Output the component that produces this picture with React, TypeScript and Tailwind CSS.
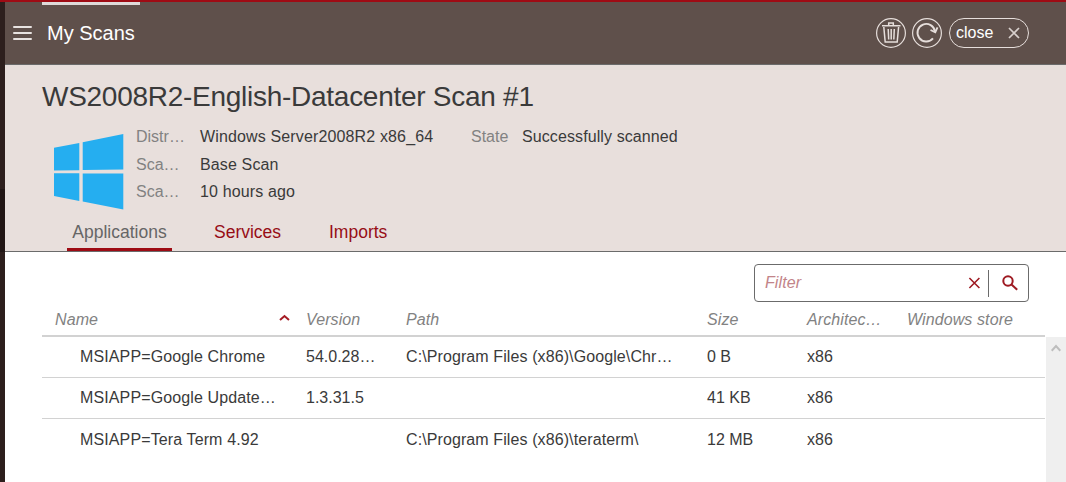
import React from "react";

const details = [
  { label: "Distr…", value: "Windows Server2008R2 x86_64" },
  { label: "Sca…", value: "Base Scan" },
  { label: "Sca…", value: "10 hours ago" },
];

const apps = [
  { name: "MSIAPP=Google Chrome", version: "54.0.28…", path: "C:\\Program Files (x86)\\Google\\Chr…", size: "0 B", arch: "x86" },
  { name: "MSIAPP=Google Update…", version: "1.3.31.5", path: "", size: "41 KB", arch: "x86" },
  { name: "MSIAPP=Tera Term 4.92", version: "", path: "C:\\Program Files (x86)\\teraterm\\", size: "12 MB", arch: "x86" },
];

const columns = "grid grid-cols-[264px_100px_301px_100px_100px_1fr] items-center";

function TrashIcon() {
  return (
    <svg width="30" height="30" viewBox="0 0 30 30" fill="none" stroke="#e6dedb" strokeWidth="1.2">
      <circle cx="15" cy="15" r="14.4" />
      <path d="M6 7.8h18.5M12.7 7.3V4.9h4.6v2.4M7.8 9l1.4 15h12L22.6 9M12.2 11l.5 10.5M15.2 11v10.5M18.3 11l-.5 10.5" strokeWidth="1.5" />
    </svg>
  );
}

function RefreshIcon() {
  return (
    <svg width="30" height="30" viewBox="0 0 30 30" fill="none" stroke="#e6dedb" strokeWidth="1.3">
      <circle cx="15" cy="15" r="14.4" strokeWidth="1.2" />
      <path d="M21 20.4A8.8 8.8 0 1 1 23 13.4" strokeWidth="1.9" />
      <path d="M18.5 12l4.8 2.2L25.5 9.4" strokeWidth="1.8" />
    </svg>
  );
}

function WindowsLogo() {
  return (
    <svg width="70" height="76" viewBox="0 0 70 76" fill="#25aef0">
      <path d="M0 13.8 25.3 9v27.2L0 36.6zM28.7 8.2 69.3 0v35.6L28.7 36zM0 39.2h25.3v27.7L0 62zM28.7 39.5h40.6v36L28.7 67.6z" />
    </svg>
  );
}

export default function App() {
  return (
    <div className="flex h-[482px] w-full flex-col overflow-hidden bg-white font-['Liberation_Sans',Arial,sans-serif] text-base leading-none text-[#3a3a3a]">
      <div className="h-0.5 shrink-0 bg-[#9e0b14]" />
      <div className="flex min-h-0 flex-1">
        <div className="flex w-[5px] shrink-0 flex-col bg-[#2d1f1d]">
          <div className="mt-[187px] h-[63px] bg-[#211615]" />
        </div>
        <div className="flex min-w-0 flex-1 flex-col">
          <header className="flex h-[63px] shrink-0 flex-col border-b border-[#6b6b6b] bg-[#5f504b]">
            <div className="ml-[37px] h-[3px] w-[98px] shrink-0 bg-[#dedad9]" />
            <div className="flex h-14 items-center pl-2">
              <svg width="19" height="16" viewBox="0 0 19 16" stroke="#e8e3e1" strokeWidth="2" strokeLinecap="round">
                <path d="M1 2h17M1 8h17M1 14h17" />
              </svg>
              <h1 className="ml-[15px] text-xl leading-6 text-white">My Scans</h1>
              <div className="mr-[37px] ml-auto flex items-center">
                <button className="mr-1.5" aria-label="Delete"><TrashIcon /></button>
                <button className="mr-[7px]" aria-label="Refresh"><RefreshIcon /></button>
                <button className="flex h-[30px] w-20 items-center rounded-full border border-[#e6dedb] pl-1.5 text-white">
                  <span>close</span>
                  <svg className="ml-[15px]" width="12" height="12" viewBox="0 0 12 12" stroke="#d8d0cd" strokeWidth="1.7">
                    <path d="M1 1l10 10M11 1L1 11" />
                  </svg>
                </button>
              </div>
            </div>
          </header>

          <section className="flex h-[187px] shrink-0 flex-col border-b border-[#6b6b6b] bg-[#e8dfdc] pl-[37px]">
            <h2 className="mt-4 text-[28px] leading-8 tracking-[-0.27px]">WS2008R2-English-Datacenter Scan #1</h2>
            <div className="mt-2.5 flex h-[92px]">
              <div className="mt-[11px] ml-3 w-[82px]"><WindowsLogo /></div>
              <dl className="w-[335px]">
                {details.map((d, i) => (
                  <div key={i} className="flex h-7 items-center last:h-[26px]">
                    <dt className="w-16 text-[#828282]">{d.label}</dt>
                    <dd className="tracking-[0.14px]">{d.value}</dd>
                  </div>
                ))}
              </dl>
              <dl className="flex h-7 items-center">
                <dt className="w-[51px] text-[#828282]">State</dt>
                <dd className="tracking-[0.1px]">Successfully scanned</dd>
              </dl>
            </div>
            <nav className="ml-[25px] flex h-9 items-stretch text-[17.5px] text-[#970d16]">
              <a className="flex w-[105px] justify-center border-b-3 border-[#9e0b14] pt-[9px] text-[#666]">Applications</a>
              <a className="ml-[42px] w-[115px] pt-[9px]">Services</a>
              <a className="pt-[9px]">Imports</a>
            </nav>
          </section>

          <main className="flex min-h-0 flex-1 flex-col pl-[37px]">
            <div className="mt-3 mr-[37px] flex h-[38px] w-[275px] shrink-0 items-center self-end rounded border border-[#6b6b6b] pl-2.5">
              <span className="flex-1 tracking-[0.1px] text-[#c28489] italic">Filter</span>
              <svg width="12" height="12" viewBox="0 0 12 12" stroke="#9e1a22" strokeWidth="1.6">
                <path d="M1.4 1l10 10M11.4 1l-10 10" />
              </svg>
              <div className="ml-2 h-[27px] w-px bg-[#6b6b6b]" />
              <svg className="mr-2.5 ml-[13px]" width="16" height="16" viewBox="0 0 16 16" fill="none" stroke="#9e1a22" strokeWidth="2">
                <circle cx="6" cy="6" r="4.7" />
                <path d="M9.5 9.5l5.7 5.3" />
              </svg>
            </div>
            <div className={columns + " mr-[21px] h-[35px] shrink-0 border-b-2 border-[#d2d2d2] pt-0.5 tracking-[0.1px] text-[#828282] italic"}>
              <div className="flex items-center pl-[13px]">
                Name
                <svg className="mr-4 mb-1 ml-auto" width="11" height="7" viewBox="0 0 11 7" fill="none" stroke="#a51c25" strokeWidth="2">
                  <path d="M1 6l4.5-4L10 6" />
                </svg>
              </div>
              <div>Version</div>
              <div>Path</div>
              <div>Size</div>
              <div>Architec…</div>
              <div>Windows store</div>
            </div>
            <div className="flex min-h-0 flex-1">
              <div className="flex-1">
                {apps.map((a, i) => (
                  <div key={a.name} className={columns + (i < 2 ? " h-[41px] border-b border-[#d2d2d2]" : " h-[42px]")}>
                    <div className="pl-[38px] tracking-[0.12px]">{a.name}</div>
                    <div>{a.version}</div>
                    <div className="tracking-[0.1px]">{a.path}</div>
                    <div>{a.size}</div>
                    <div>{a.arch}</div>
                  </div>
                ))}
              </div>
              <div className="ml-px flex w-5 justify-center bg-[#efefef] pt-[7px]">
                <svg width="10" height="8" viewBox="0 0 10 8" fill="none" stroke="#bdbdbd" strokeWidth="2">
                  <path d="M.7 6.7 5 2l4.3 4.7" />
                </svg>
              </div>
            </div>
          </main>
        </div>
      </div>
    </div>
  );
}
